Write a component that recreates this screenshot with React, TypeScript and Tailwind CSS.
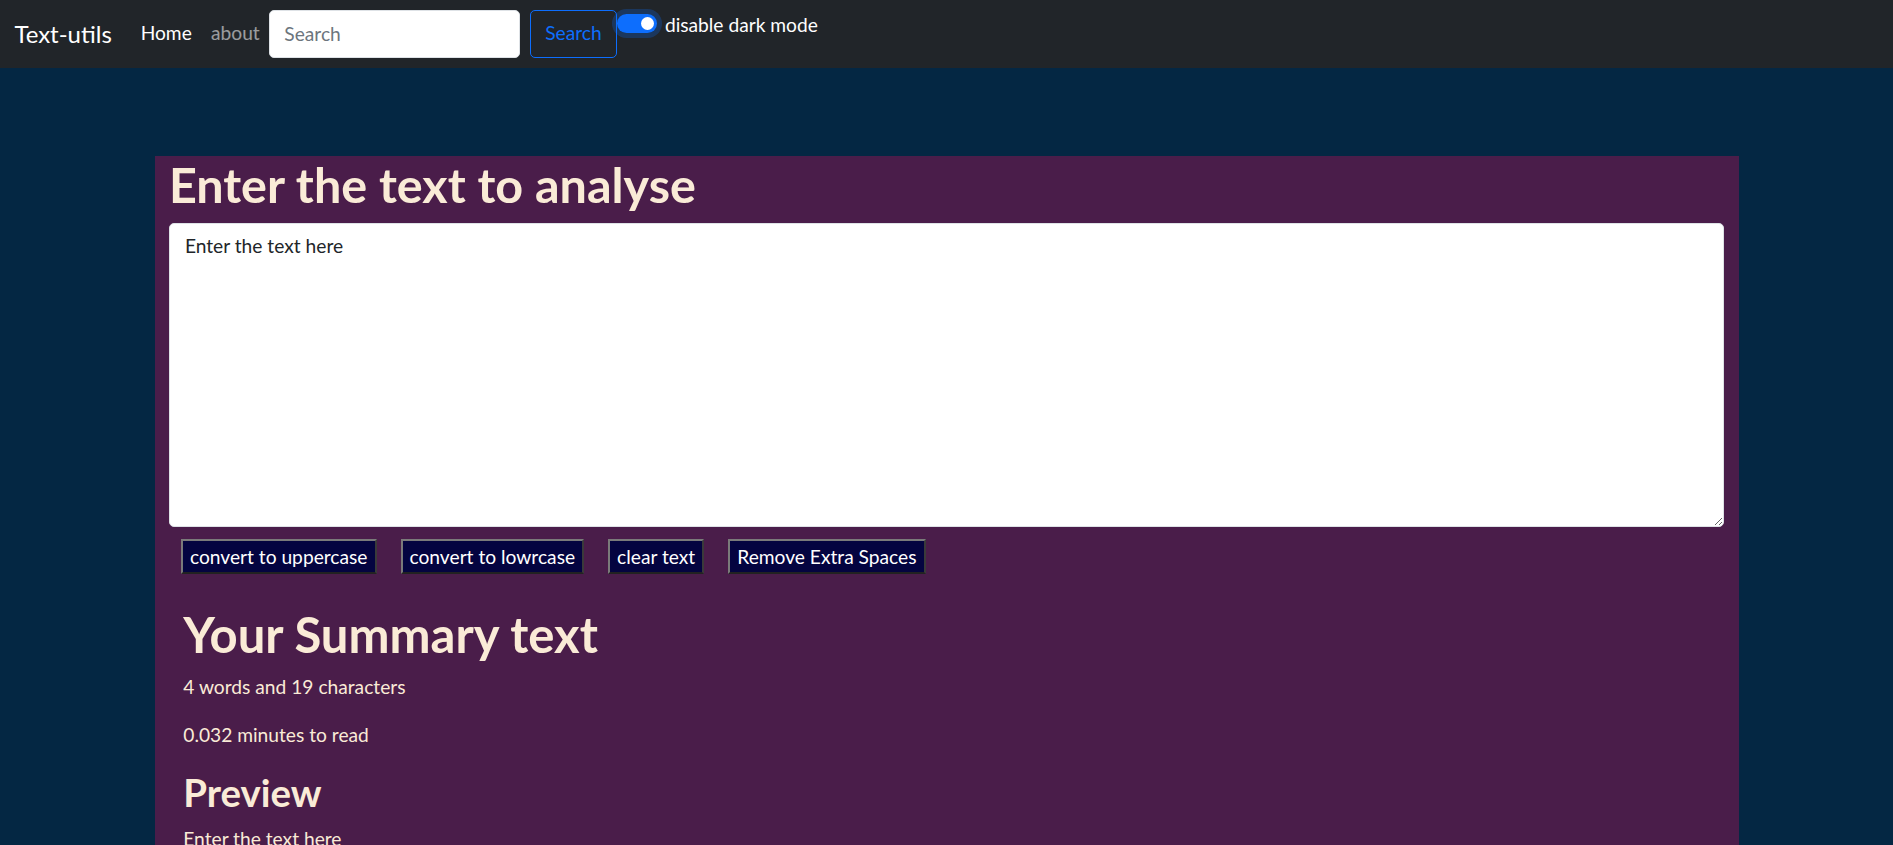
import React from 'react';

const font = { fontFamily: 'Lato, "Noto Sans", sans-serif' };

function Navbar() {
  return (
    <nav className="h-[67.6px] bg-[#212529] flex items-start px-[14.4px] py-[9.6px]">
      <a className="text-[24px] leading-[48px] text-white mr-[19.2px] whitespace-nowrap">Text-utils</a>
      <ul className="flex items-center h-[48px]">
        <li>
          <a className="px-[9.6px] text-[19.2px] text-white">Home</a>
        </li>
        <li>
          <a className="px-[9.6px] text-[19.2px] text-white/55">about</a>
        </li>
      </ul>
      <form className="flex items-center h-[48px]">
        <input
          placeholder="Search"
          className="w-[251px] h-[48px] rounded-[5px] bg-white px-[14px] text-[19.2px] text-[#212529] placeholder:text-[#6c757d] border border-[#dee2e6] outline-none mr-[9.6px]"
        />
        <button
          type="button"
          className="h-[48px] w-[87px] rounded-[5px] border border-[#0d6efd] text-[#0d6efd] text-[19.2px]"
        >
          Search
        </button>
      </form>
      <div className="flex items-start h-[40px]">
        <div className="mt-[4.5px] w-[40px] h-[19px] rounded-full bg-[#0d6efd] ring-[5px] ring-[#0d6efd]/25 flex items-center justify-end pr-[3px]">
          <div className="w-[13px] h-[13px] rounded-full bg-white" />
        </div>
        <label className="ml-[8px] text-[19.2px] leading-[28px] text-white mt-[1px]">disable dark mode</label>
      </div>
    </nav>
  );
}

const buttons = ['convert to uppercase', 'convert to lowrcase', 'clear text', 'Remove Extra Spaces'];

export default function App() {
  return (
    <div style={font} className="bg-[#042743] overflow-hidden h-[845px]">
      <Navbar />
      <main className="mt-[88.4px] w-[1584px] mx-auto bg-[#4a1d4a] px-[14.4px] text-[#faebd7]">
        <h1 className="text-[48.5px] leading-[57.6px] font-bold mb-[9.6px]">Enter the text to analyse</h1>
        <textarea
          defaultValue="Enter the text here"
          className="block w-full h-[304px] bg-white text-[#212529] text-[19.2px] leading-[28.8px] px-[15px] py-[8px] rounded-[5px] border border-[#dee2e6] outline-none"
        />
        <div className="flex gap-[24px] pl-[12px] mt-[12px]">
          {buttons.map((b) => (
            <button
              key={b}
              type="button"
              className="h-[35px] px-[7px] bg-[#040440] text-white text-[19.2px] leading-[27px] border-2 border-t-[#7a7a7a] border-l-[#7a7a7a] border-r-[#3a3a3a] border-b-[#222]"
            >
              {b}
            </button>
          ))}
        </div>
        <div className="px-[14.4px] mt-[32px]">
          <h1 className="text-[49px] leading-[57.6px] font-bold mb-[9.6px]">Your Summary text</h1>
          <p className="text-[19.2px] leading-[28.8px] mb-[19.2px]">4 words and 19 characters</p>
          <p className="text-[19.2px] leading-[28.8px] mb-[19.2px]">0.032 minutes to read</p>
          <h2 className="text-[38.4px] leading-[46px] font-bold mb-[9.6px]">Preview</h2>
          <p className="text-[19.2px] leading-[28.8px]">Enter the text here</p>
        </div>
      </main>
    </div>
  );
}
